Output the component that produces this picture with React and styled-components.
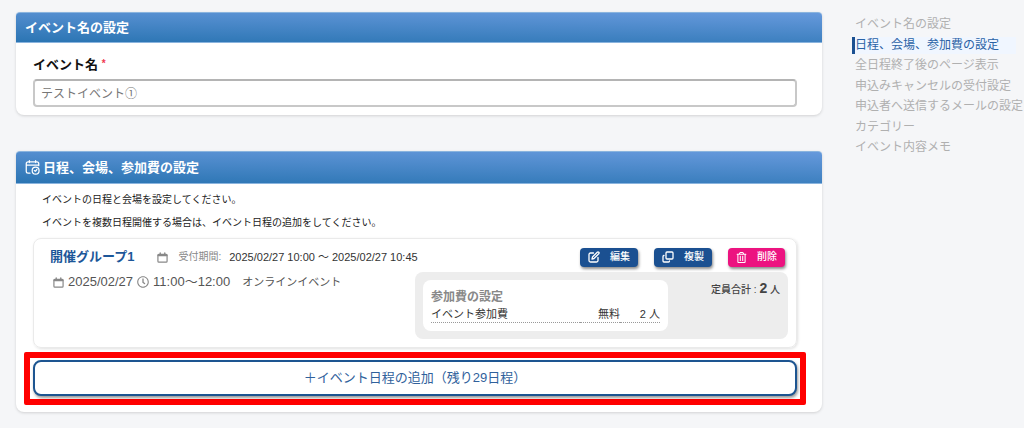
import React, {useState} from 'react';
import styled, {createGlobalStyle} from 'styled-components';
import {FaRegTrashAlt, FaRegClock} from 'react-icons/fa';

const GlobalStyle = createGlobalStyle`
    * { box-sizing: border-box; }
    body {
        margin: 0;
        background: #f5f6f8;
        color: #333;
        font-family: "Liberation Sans", "Noto Sans CJK JP", sans-serif;
        font-size: 10px;
    }
    button, input { font-family: inherit; }
    h2, h3, h4, p, ul { margin: 0; padding: 0; }
`;

const Page = styled.div`
    display: grid;
    grid-template-columns: minmax(0, 1fr) 172px;
    gap: 30px;
    padding: 12px 0 16px 16px;
`;

const Main = styled.main`
    display: flex;
    flex-direction: column;
    gap: 36px;
`;

const Panel = styled.section`
    background: #fff;
    border-radius: 4px 4px 8px 8px;
    box-shadow: 0 1px 3px rgba(0, 0, 0, 0.15);
`;

const PanelTitle = styled.h2`
    display: flex;
    align-items: center;
    gap: 3px;
    height: ${props => (props.$tall ? '33px' : '31px')};
    padding: 0 9px;
    border: 1px solid #8ab4de;
    border-width: 1px 0;
    border-radius: 4px 4px 0 0;
    background: linear-gradient(181deg, #6699dc, #2b75b3);
    color: #fff;
    font-size: 13px;
    line-height: 20px;
`;

const NameBody = styled.div`
    padding: 12px 25px 8px 17px;
`;

const Label = styled.label`
    display: block;
    margin-bottom: 5px;
    color: #111;
    font-size: 13px;
    font-weight: bold;
    line-height: 18px;
`;

const Required = styled.span`
    color: #f0384f;
    font-size: 10px;
    vertical-align: 2px;
`;

const TextInput = styled.input`
    display: block;
    width: 100%;
    height: 28px;
    padding: 0 6px 2px;
    border: 2px solid #c8c8c8;
    border-top-color: #b4b4b4;
    border-radius: 4px;
    background: #fff;
    color: #777;
    font-size: 12px;
`;

const ScheduleBody = styled.div`
    padding: 4px 16px 7px 8px;
`;

const Note = styled.p`
    padding-left: 18px;
    color: #222;
    line-height: 23px;
`;

const GroupCard = styled.article`
    margin: 4px 9px 4px;
    padding: 8px 8px 8px 16px;
    border: 1px solid #eaeaea;
    border-radius: 8px;
    box-shadow: 1px 1px 3px rgba(0, 0, 0, 0.12);
`;

const GroupHead = styled.header`
    display: flex;
    align-items: center;
    height: 20px;
    margin-bottom: 5px;
`;

const GroupName = styled.h3`
    margin-right: 23px;
    color: #1d5799;
    font-size: 13px;
    line-height: 20px;
`;

const Period = styled.div`
    display: flex;
    align-items: center;
    gap: 8px;
    color: #333;
    font-size: 11px;
    line-height: 16px;
`;

const Muted = styled.span`
    display: flex;
    align-items: center;
    gap: 10px;
    color: #888;
    font-size: 10px;
`;

const Actions = styled.div`
    display: flex;
    gap: 16px;
    margin-left: auto;
    margin-right: 3px;
`;

const ActionButton = styled.button`
    display: flex;
    align-items: center;
    gap: 10px;
    height: 19px;
    padding: 0 8px;
    border: 0;
    border-radius: 4px;
    background: ${props => (props.$danger ? '#ec1380' : '#1b5091')};
    box-shadow: 1px 2px 3px rgba(0, 0, 0, 0.45);
    color: #fff;
    font-size: 10px;
    font-weight: 500;
    line-height: 18px;
`;

const GroupContent = styled.div`
    display: flex;
    justify-content: space-between;
    align-items: flex-start;
`;

const DateLine = styled.div`
    display: flex;
    align-items: center;
    gap: 4px;
    padding-left: 3px;
    color: #555;
    font-size: 13px;
    line-height: 20px;

    svg { color: #888; }
`;

const Place = styled.span`
    margin-left: 8px;
    font-size: 11px;
`;

const FeeArea = styled.div`
    display: flex;
    justify-content: space-between;
    width: 373px;
    height: 67px;
    padding: 8px;
    border-radius: 8px;
    background: #ededed;
`;

const FeeBox = styled.div`
    width: 245px;
    padding: 8px 8px 0;
    border-radius: 8px;
    background: #fff;
`;

const FeeTitle = styled.h4`
    color: #888;
    font-size: 12px;
    line-height: 18px;
`;

const FeeTable = styled.table`
    width: 100%;
    border-collapse: collapse;
    font-size: 11px;
    line-height: 16px;

    td {
        padding: 0;
        border-bottom: 1px dotted #999;
    }

    td + td {
        width: 40px;
        text-align: right;
    }
`;

const Total = styled.p`
    color: #444;
    font-weight: 500;
    line-height: 16px;

    strong { font-size: 14px; }
`;

const Highlight = styled.div`
    padding: 2px 3px 3px;
    border: 6px solid #ff0000;
    border-radius: 2px;
`;

const AddButton = styled.button`
    display: block;
    width: 100%;
    height: 36px;
    padding: 0 0 4px;
    border: 2px solid #1d5591;
    border-radius: 8px;
    background: #fff;
    box-shadow: 1px 2px 3px rgba(0, 0, 0, 0.4);
    color: #30619c;
    font-size: 13px;
`;

const NavList = styled.ul`
    display: flex;
    flex-direction: column;
    justify-content: space-between;
    height: 140px;
    margin-top: 4px;
    list-style: none;
`;

const NavLink = styled.a`
    display: block;
    margin-right: 8px;
    border-left: 3px solid ${props => (props.$active ? '#1b5091' : 'transparent')};
    background: ${props => (props.$active ? '#f0f6ff' : 'none')};
    color: ${props => (props.$active ? '#2a62a5' : '#b0b0b0')};
    font-size: 12px;
    line-height: 17px;
    text-decoration: none;
    white-space: nowrap;
`;

const Icon = ({size, children}) => (
    <svg width={size} height={size} viewBox="0 0 24 24" fill="none" stroke="currentColor"
         strokeWidth="2.6" strokeLinecap="round" strokeLinejoin="round" aria-hidden="true">
        {children}
    </svg>
);

const CalendarIcon = () => (
    <Icon size={11}>
        <rect x="2" y="5" width="20" height="17" rx="2"/>
        <path d="M3 7h18" strokeWidth="4"/>
        <path d="M7 2v3M17 2v3" strokeWidth="3"/>
    </Icon>
);

const ScheduleIcon = () => (
    <Icon size={15}>
        <g strokeWidth="2">
            <path d="M8 21H5a3 3 0 0 1-3-3V6a3 3 0 0 1 3-3h14a3 3 0 0 1 3 3v3M2 8h20M7 1v3M17 1v3"/>
            <circle cx="17" cy="17" r="5.5"/>
            <path d="M15 17l2 1 2-3"/>
        </g>
    </Icon>
);

const EditIcon = () => (
    <Icon size={12}>
        <path d="M11 4H5a3 3 0 0 0-3 3v12a3 3 0 0 0 3 3h12a3 3 0 0 0 3-3v-6"/>
        <path d="M18.5 2.500a2.100 2.100 0 0 1 3 3L12 15l-4 1 1-4z"/>
    </Icon>
);

const CopyIcon = () => (
    <Icon size={12}>
        <rect x="8" y="2" width="14" height="14" rx="2"/>
        <path d="M4 9a2 2 0 0 0-2 2v9a2 2 0 0 0 2 2h9a2 2 0 0 0 2-2"/>
    </Icon>
);

const navItems = [
    'イベント名の設定',
    '日程、会場、参加費の設定',
    '全日程終了後のページ表示',
    '申込みキャンセルの受付設定',
    '申込者へ送信するメールの設定',
    'カテゴリー',
    'イベント内容メモ',
];

const App = () => {
    const [name, setName] = useState('テストイベント①');

    return (
        <>
            <GlobalStyle/>
            <Page lang="ja">
                <Main>
                    <Panel>
                        <PanelTitle>イベント名の設定</PanelTitle>
                        <NameBody>
                            <Label htmlFor="event-name">イベント名 <Required>*</Required></Label>
                            <TextInput id="event-name" value={name} onChange={e => setName(e.target.value)}/>
                        </NameBody>
                    </Panel>

                    <Panel>
                        <PanelTitle $tall>
                            <ScheduleIcon/>
                            日程、会場、参加費の設定
                        </PanelTitle>
                        <ScheduleBody>
                            <Note>イベントの日程と会場を設定してください。</Note>
                            <Note>イベントを複数日程開催する場合は、イベント日程の追加をしてください。</Note>
                            <GroupCard>
                                <GroupHead>
                                    <GroupName>開催グループ1</GroupName>
                                    <Period>
                                        <Muted><CalendarIcon/>受付期間:</Muted>
                                        <span>2025/02/27 10:00 ～ 2025/02/27 10:45</span>
                                    </Period>
                                    <Actions>
                                        <ActionButton><EditIcon/>編集</ActionButton>
                                        <ActionButton><CopyIcon/>複製</ActionButton>
                                        <ActionButton $danger><FaRegTrashAlt size={11}/>削除</ActionButton>
                                    </Actions>
                                </GroupHead>
                                <GroupContent>
                                    <DateLine>
                                        <CalendarIcon/>
                                        <span>2025/02/27</span>
                                        <FaRegClock size={12}/>
                                        <span>11:00～12:00</span>
                                        <Place>オンラインイベント</Place>
                                    </DateLine>
                                    <FeeArea>
                                        <FeeBox>
                                            <FeeTitle>参加費の設定</FeeTitle>
                                            <FeeTable>
                                                <tbody>
                                                    <tr>
                                                        <td>イベント参加費</td>
                                                        <td>無料</td>
                                                        <td>2 人</td>
                                                    </tr>
                                                </tbody>
                                            </FeeTable>
                                        </FeeBox>
                                        <Total>定員合計 : <strong>2</strong> 人</Total>
                                    </FeeArea>
                                </GroupContent>
                            </GroupCard>
                            <Highlight>
                                <AddButton>＋イベント日程の追加（残り29日程）</AddButton>
                            </Highlight>
                        </ScheduleBody>
                    </Panel>
                </Main>

                <nav>
                    <NavList>
                        {navItems.map((item, index) => (
                            <li key={item}>
                                <NavLink href="#" $active={index === 1}>{item}</NavLink>
                            </li>
                        ))}
                    </NavList>
                </nav>
            </Page>
        </>
    );
};

export default App;
